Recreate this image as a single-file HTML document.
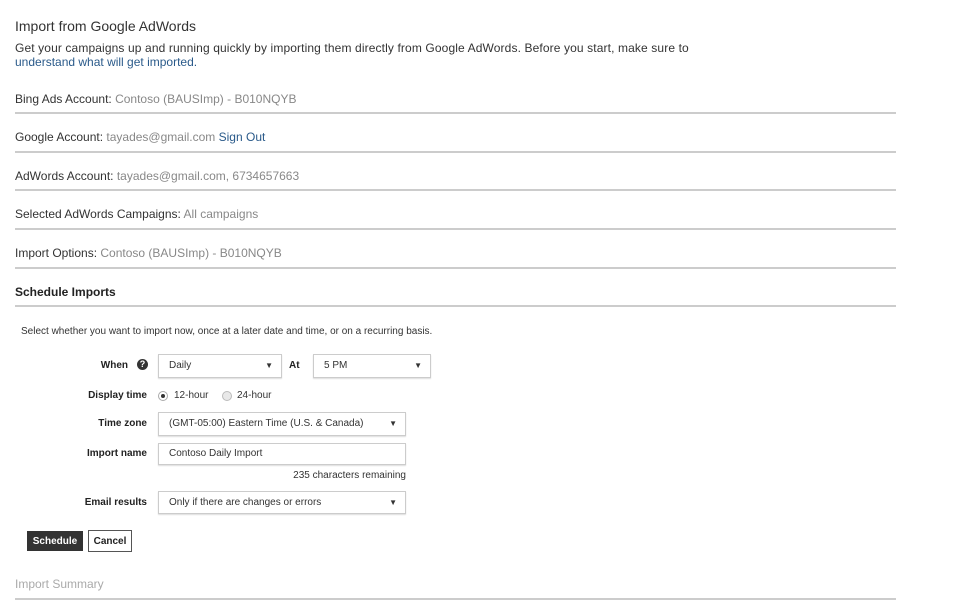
<!DOCTYPE html>
<html><head><meta charset="utf-8"><style>
body{margin:0;width:975px;height:607px;background:#fff;position:relative;font-family:"Liberation Sans",sans-serif;overflow:hidden}
.a{position:absolute;white-space:nowrap}
.s{font-size:12px;color:#333}
.g{color:#888}
.ln{position:absolute;left:15px;width:881px;height:2px;background:#ccc}
.lab{position:absolute;font-size:10px;font-weight:bold;color:#222;text-align:right;width:132px;left:15px}
.box{position:absolute;border:1px solid #ccc;box-sizing:border-box;font-size:10px;color:#333;padding-left:10px;background:#fff;box-shadow:0 1px 1px #ddd}
.box .ar{position:absolute;right:8px;font-size:8px}
</style></head><body>
<div class="a" style="left:15px;top:18px;font-size:14px;color:#333">Import from Google AdWords</div>
<div class="a s" style="left:15px;top:41px;letter-spacing:0.12px">Get your campaigns up and running quickly by importing them directly from Google AdWords. Before you start, make sure to</div>
<div class="a s" style="left:15px;top:55px;color:#2a5a8a">understand what will get imported.</div>

<div class="a s" style="left:15px;top:92px">Bing Ads Account: <span class="g">Contoso (BAUSImp) - B010NQYB</span></div>
<div class="ln" style="top:112px"></div>
<div class="a s" style="left:15px;top:130px">Google Account: <span class="g">tayades@gmail.com</span> <span style="color:#2a5a8a">Sign Out</span></div>
<div class="ln" style="top:151px"></div>
<div class="a s" style="left:15px;top:169px">AdWords Account: <span class="g">tayades@gmail.com, 6734657663</span></div>
<div class="ln" style="top:189px"></div>
<div class="a s" style="left:15px;top:207px">Selected AdWords Campaigns: <span class="g">All campaigns</span></div>
<div class="ln" style="top:228px"></div>
<div class="a s" style="left:15px;top:246px">Import Options: <span class="g">Contoso (BAUSImp) - B010NQYB</span></div>
<div class="ln" style="top:267px"></div>
<div class="a s" style="left:15px;top:285px;font-weight:bold;color:#222">Schedule Imports</div>
<div class="ln" style="top:305px"></div>

<div class="a" style="left:21px;top:326px;font-size:10px;color:#333">Select whether you want to import now, once at a later date and time, or on a recurring basis.</div>

<div class="lab" style="top:360px;width:113px">When</div>
<div class="a" style="left:137px;top:359px;width:11px;height:11px;border-radius:50%;background:#333;color:#fff;font-size:9px;font-weight:bold;text-align:center;line-height:11px">?</div>
<div class="box" style="left:158px;top:354px;width:124px;height:24px;line-height:22px">Daily<span class="ar">▼</span></div>
<div class="a" style="left:289px;top:360px;font-size:10px;font-weight:bold;color:#222">At</div>
<div class="box" style="left:313px;top:354px;width:118px;height:24px;line-height:22px">5 PM<span class="ar">▼</span></div>

<div class="lab" style="top:390px">Display time</div>
<div class="a" style="left:158px;top:391px;width:8px;height:8px;border:1px solid #aaa;border-radius:50%;background:#fff"><div style="margin:2px;width:4px;height:4px;border-radius:50%;background:#333"></div></div>
<div class="a" style="left:174px;top:390px;font-size:10px;color:#333">12-hour</div>
<div class="a" style="left:222px;top:391px;width:8px;height:8px;border:1px solid #bbb;border-radius:50%;background:#e8e8e8"></div>
<div class="a" style="left:237px;top:390px;font-size:10px;color:#333">24-hour</div>

<div class="lab" style="top:418px">Time zone</div>
<div class="box" style="left:158px;top:412px;width:248px;height:24px;line-height:22px">(GMT-05:00) Eastern Time (U.S. &amp; Canada)<span class="ar">▼</span></div>

<div class="lab" style="top:448px">Import name</div>
<div class="box" style="left:158px;top:443px;width:248px;height:22px;line-height:20px">Contoso Daily Import</div>
<div class="a" style="left:250px;width:156px;text-align:right;top:470px;font-size:10px;color:#333">235 characters remaining</div>

<div class="lab" style="top:497px">Email results</div>
<div class="box" style="left:158px;top:491px;width:248px;height:23px;line-height:21px">Only if there are changes or errors<span class="ar">▼</span></div>

<div class="a" style="left:27px;top:531px;width:56px;height:20px;background:#333;color:#fff;font-size:10px;font-weight:bold;text-align:center;line-height:21px">Schedule</div>
<div class="a" style="left:88px;top:530px;width:42px;height:20px;border:1px solid #555;color:#222;font-size:10px;font-weight:bold;text-align:center;line-height:22px">Cancel</div>

<div class="a" style="left:15px;top:577px;font-size:12px;color:#aaa">Import Summary</div>
<div class="ln" style="top:598px"></div>
</body></html>
